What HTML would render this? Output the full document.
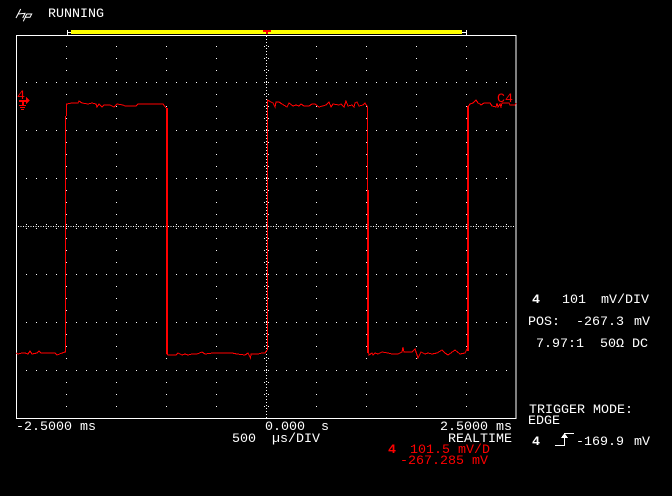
<!DOCTYPE html>
<html>
<head>
<meta charset="utf-8">
<style>
html,body{margin:0;padding:0;background:#000;width:672px;height:496px;overflow:hidden}
svg{display:block}
text{font-family:"Liberation Mono",monospace;font-size:13.33px;fill:#fff;white-space:pre}
.r{fill:#f00}
.b{font-weight:bold}
</style>
</head>
<body>
<svg width="672" height="496" viewBox="0 0 672 496" xmlns="http://www.w3.org/2000/svg">
<rect width="672" height="496" fill="#000"/>
<g shape-rendering="crispEdges">
<!-- top bar -->
<rect x="71" y="30" width="391" height="4" fill="#ff0"/>
<rect x="67" y="30" width="1" height="5" fill="#fff"/>
<rect x="67" y="32" width="4" height="1" fill="#fff"/>
<rect x="466" y="30" width="1" height="5" fill="#fff"/>
<rect x="462" y="32" width="4" height="1" fill="#fff"/>
<rect x="263" y="30" width="8" height="2" fill="#f00"/>
<rect x="266" y="32" width="2" height="2" fill="#f00"/>
<!-- frame -->
<rect x="16.5" y="35.5" width="499.5" height="383" fill="none" stroke="#fff" stroke-width="1"/>
<!-- grid verticals -->
<g stroke="#fff" stroke-width="1" stroke-dasharray="1 11">
<line x1="66.5" y1="46" x2="66.5" y2="410"/>
<line x1="116.5" y1="46" x2="116.5" y2="410"/>
<line x1="166.5" y1="46" x2="166.5" y2="410"/>
<line x1="216.5" y1="46" x2="216.5" y2="410"/>
<line x1="316.5" y1="46" x2="316.5" y2="410"/>
<line x1="366.5" y1="46" x2="366.5" y2="410"/>
<line x1="416.5" y1="46" x2="416.5" y2="410"/>
<line x1="466.5" y1="46" x2="466.5" y2="410"/>
<line x1="264.5" y1="46" x2="264.5" y2="410"/>
<line x1="268.5" y1="46" x2="268.5" y2="410"/>
</g>
<!-- grid horizontals -->
<g stroke="#fff" stroke-width="1" stroke-dasharray="1 9">
<line x1="26" y1="82.5" x2="510" y2="82.5"/>
<line x1="26" y1="130.5" x2="510" y2="130.5"/>
<line x1="26" y1="178.5" x2="510" y2="178.5"/>
<line x1="26" y1="274.5" x2="510" y2="274.5"/>
<line x1="26" y1="322.5" x2="510" y2="322.5"/>
<line x1="26" y1="370.5" x2="510" y2="370.5"/>
<line x1="26" y1="224.5" x2="510" y2="224.5"/>
<line x1="26" y1="228.5" x2="510" y2="228.5"/>
</g>
<!-- center axes -->
<line x1="266.5" y1="36" x2="266.5" y2="418" stroke="#fff" stroke-width="1" stroke-dasharray="1 2"/>
<line x1="18" y1="226.5" x2="516" y2="226.5" stroke="#fff" stroke-width="1" stroke-dasharray="1 1.5"/>
<!-- trace -->
<g fill="none" stroke="#f00" stroke-width="1">
<polyline points="16,353 18,354 22,353 25,353 28,354 30,351 32,354 37,353 39,351 41,353 55,353 57,355 62,353 65,352 65.5,352 65.5,116"/>
<polyline points="66.5,116 66.5,104 72,103 78,103 79,101 82,103 88,104 92,103 96,104 97,107 99,104 102,107 104,105 110,105 114,107 117,104 123,105 125,106 136,106 138,104 163,104 166,108"/>
<polyline points="167,354 168,355 176,355 178,353 182,355 185,354 188,355 192,354 197,354 202,352 205,354 213,353 227,353 232,353 237,354 245,355 248,353 250.5,358 251,354 258,354 262,353 265,353 267,350"/>
<polyline points="267.5,350 267.5,100 271,102 273,103 275,107 276,102 279,102 282,104 287,107 289,103 293,106 296,105 299,106 301,104 304,106 309,106 312,104 315,104 319,107 326,105 329,102 331,107 333,104 339,105 341,104 344,107 346,101 348,106 352,105 354,107 355,103 357,102 359,106 363,105 365,103 367.5,107 367.5,190"/>
<polyline points="368.5,352 369,355 372,353 373,355 375,353 378,354 382,352 388,353 392,354 398,354 402,352 403,347 404,352 412,352 415,349 418,358 421,352 425,354 428,353 432,354 437,353 442,350 445,353 448,355 455,350 460,354 465,353 467.5,348"/>
<polyline points="468.5,350 468.5,106 470,104 473,103 476,100 478,103 480,104 481,105 484,103 490,103 492,106 496,107 497,103 498,107 500,104 501,107 502,103 509,103 510,105 515,105 516,103"/>
</g>
<rect x="166" y="108" width="2" height="246" fill="#f00"/>
<rect x="367" y="190" width="2" height="163" fill="#f00"/>
<rect x="467" y="106" width="2" height="245" fill="#f00"/>
<!-- channel marker -->
<rect x="19" y="100" width="8" height="2" fill="#f00"/>
<polygon points="26,97 30,100.5 26,104" fill="#f00"/>
<rect x="22" y="100" width="2" height="6" fill="#f00"/>
<rect x="19" y="105" width="7" height="1" fill="#f00"/>
<rect x="20" y="107" width="5" height="1" fill="#f00"/>
<rect x="21" y="109" width="3" height="1" fill="#f00"/>
<!-- trigger symbol -->
<path d="M555 445.5H564.5V433.5H574" fill="none" stroke="#fff" stroke-width="1"/>
<polygon points="564.5,433 568,438 561,438" fill="#fff"/>
</g>
<!-- hp logo -->
<g fill="none" stroke="#fff" stroke-width="1">
<path d="M20.7 9L16 18M18.3 14L25 13.3L22.7 18M26.7 14L23.3 21.3M26.7 14H31.7L30 17.3H25"/>
</g>
<!-- text -->
<text x="48" y="17">RUNNING</text>
<text class="r" x="17" y="99">4</text>
<text class="r" x="497" y="102">C4</text>
<text x="16" y="430">-2.5000 ms</text>
<text x="265" y="430">0.000  s</text>
<text x="440" y="430">2.5000 ms</text>
<text x="232" y="442">500  µs/DIV</text>
<text x="448" y="442">REALTIME</text>
<text class="r b" x="388" y="453">4</text>
<text class="r" x="410" y="453">101.5 mV/D</text>
<text class="r" x="400" y="464">-267.285 mV</text>
<text class="b" x="532" y="303">4</text>
<text x="562" y="303">101</text>
<text x="601" y="303">mV/DIV</text>
<text x="528" y="325">POS:</text>
<text x="576" y="325">-267.3</text>
<text x="634" y="325">mV</text>
<text x="536" y="347">7.97:1</text>
<text x="600" y="347">50Ω</text>
<text x="632" y="347">DC</text>
<text x="529" y="413">TRIGGER MODE:</text>
<text x="528" y="424">EDGE</text>
<text class="b" x="532" y="445">4</text>
<text x="576" y="445">-169.9</text>
<text x="634" y="445">mV</text>
</svg>
</body>
</html>
